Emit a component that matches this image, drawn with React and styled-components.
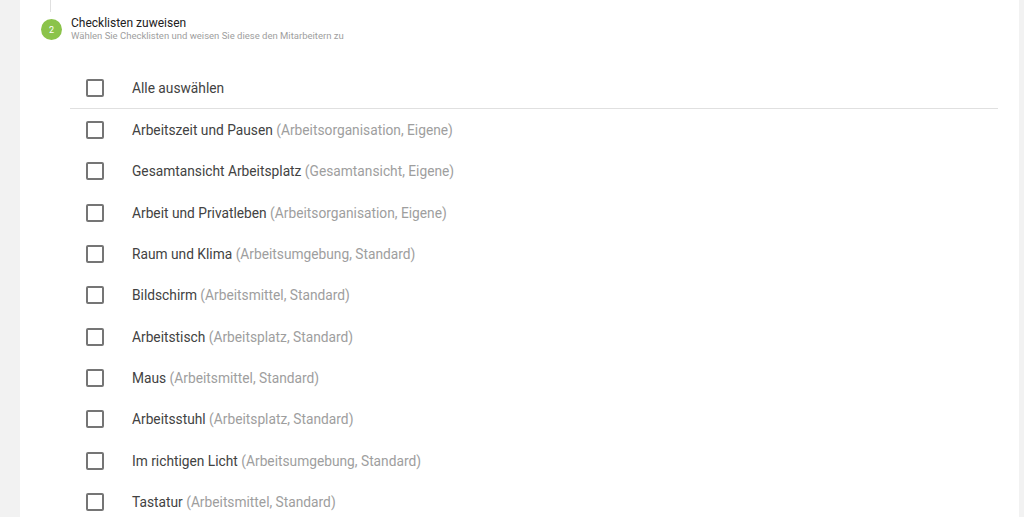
import React from "react";
import styled, { createGlobalStyle } from "styled-components";

const GlobalStyle = createGlobalStyle`
  html, body {
    margin: 0;
    padding: 0;
    background: #f2f2f2;
    font-family: Roboto, "Liberation Sans", Arial, sans-serif;
  }
`;

const Page = styled.div`
  padding: 0 5px 0 20px;
  height: 517px;
  overflow: hidden;
`;

const Card = styled.div`
  background: #fff;
  height: 100%;
  padding-right: 21px;
`;

const StepLine = styled.div`
  margin-left: 30px;
  width: 1px;
  height: 12px;
  background: #e0e0e0;
`;

const StepHeader = styled.div`
  display: flex;
  align-items: center;
  gap: 9px;
  height: 21px;
  margin: 7px 0 0 21px;
`;

const StepCircle = styled.div`
  width: 21px;
  height: 21px;
  border-radius: 50%;
  background: #8bc34a;
  color: #fff;
  font-size: 9px;
  display: flex;
  align-items: center;
  justify-content: center;
`;

const StepText = styled.div`
  display: flex;
  flex-direction: column;
  margin-top: -2px;
`;

const StepTitle = styled.div`
  font-size: 12px;
  line-height: 13px;
  color: #212121;
`;

const StepSub = styled.div`
  font-size: 9.5px;
  line-height: 11px;
  color: #9e9e9e;
`;

const List = styled.div`
  margin: 28px 0 0 50px;
`;

const Row = styled.label`
  display: flex;
  align-items: center;
  gap: 28px;
  height: 41.35px;
  padding-left: 16px;
  box-sizing: border-box;
  border-bottom: ${p => (p.divider ? "1px solid #e0e0e0" : "none")};
`;

const Box = styled.span`
  width: 18px;
  height: 18px;
  box-sizing: border-box;
  border: 2px solid #757575;
  border-radius: 2px;
  flex-shrink: 0;
`;

const Label = styled.span`
  font-size: 13.75px;
  color: #424242;
`;

const Meta = styled.span`
  color: #9e9e9e;
`;

const items = [
  ["Arbeitszeit und Pausen", "Arbeitsorganisation, Eigene"],
  ["Gesamtansicht Arbeitsplatz", "Gesamtansicht, Eigene"],
  ["Arbeit und Privatleben", "Arbeitsorganisation, Eigene"],
  ["Raum und Klima", "Arbeitsumgebung, Standard"],
  ["Bildschirm", "Arbeitsmittel, Standard"],
  ["Arbeitstisch", "Arbeitsplatz, Standard"],
  ["Maus", "Arbeitsmittel, Standard"],
  ["Arbeitsstuhl", "Arbeitsplatz, Standard"],
  ["Im richtigen Licht", "Arbeitsumgebung, Standard"],
  ["Tastatur", "Arbeitsmittel, Standard"]
];

export default function App() {
  return (
    <Page>
      <GlobalStyle />
      <Card>
        <StepLine />
        <StepHeader>
          <StepCircle>2</StepCircle>
          <StepText>
            <StepTitle>Checklisten zuweisen</StepTitle>
            <StepSub>
              Wählen Sie Checklisten und weisen Sie diese den Mitarbeitern zu
            </StepSub>
          </StepText>
        </StepHeader>
        <List>
          <Row divider>
            <Box />
            <Label>Alle auswählen</Label>
          </Row>
          {items.map(([name, meta]) => (
            <Row key={name}>
              <Box />
              <Label>
                {name} <Meta>({meta})</Meta>
              </Label>
            </Row>
          ))}
        </List>
      </Card>
    </Page>
  );
}
